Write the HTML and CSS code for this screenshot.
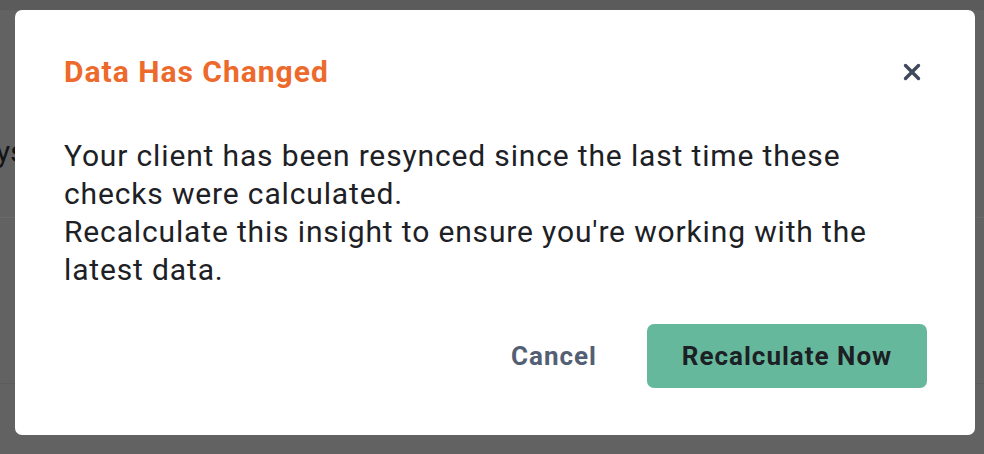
FILE: index.html
```html
<!DOCTYPE html>
<html lang="en">
<head>
<meta charset="utf-8">
<title>Data Has Changed</title>
<link rel="stylesheet" href="styles.css">
</head>
<body>
<div class="page">
  <div class="page-header"></div>
  <div class="page-row page-row-first"><span class="page-text">ys</span></div>
  <div class="page-row page-row-second"></div>
</div>

<div class="overlay">
  <div class="modal" role="dialog" aria-labelledby="modal-title">
    <div class="modal-head">
      <h2 class="modal-title" id="modal-title">Data Has Changed</h2>
      <button class="modal-close" aria-label="Close">
        <svg width="18" height="18" viewBox="0 0 18 18" aria-hidden="true">
          <path d="M2.5 2.5 L15.5 15.5 M15.5 2.5 L2.5 15.5" stroke="#3f4a5b" stroke-width="3.4" stroke-linecap="round" fill="none"/>
        </svg>
      </button>
    </div>
    <div class="modal-body">
      <p>Your client has been resynced since the last time these checks were calculated.</p>
      <p>Recalculate this insight to ensure you're working with the latest data.</p>
    </div>
    <div class="modal-actions">
      <button class="btn btn-cancel">Cancel</button>
      <button class="btn btn-primary">Recalculate Now</button>
    </div>
  </div>
</div>
</body>
</html>
```

FILE: styles.css
```css
* {
  box-sizing: border-box;
}

html, body {
  margin: 0;
  padding: 0;
  height: 100%;
}

body {
  background: #626262;
  font-family: Roboto, "Noto Sans", Arial, sans-serif;
  overflow: hidden;
}

.page {
  display: flex;
  flex-direction: column;
}

.page-header {
  height: 10px;
  background: #5b5b5b;
}

.page-row {
  display: flex;
}

.page-row-first {
  height: 208px;
  align-items: flex-end;
  border-bottom: 1px solid #6a6a6a;
  padding-bottom: 45px;
}

.page-text {
  font-size: 30px;
  line-height: 40px;
  color: #141414;
  margin-left: -4px;
}

.page-row-second {
  height: 166px;
  border-bottom: 1px solid #5c5c5c;
}

.overlay {
  position: fixed;
  inset: 0;
  display: flex;
  align-items: flex-start;
  justify-content: flex-start;
  padding: 10px 0 0 15px;
}

.modal {
  width: 960px;
  background: #ffffff;
  border-radius: 7px;
  padding: 44px 48px 47px 49px;
  display: flex;
  flex-direction: column;
}

.modal-head {
  display: flex;
  align-items: center;
  justify-content: space-between;
  height: 36px;
}

.modal-title {
  margin: 0;
  font-size: 30px;
  line-height: 36px;
  font-weight: 700;
  letter-spacing: 1px;
  color: #ec6a2c;
}

.modal-close {
  width: 30px;
  height: 30px;
  padding: 0;
  border: 0;
  background: transparent;
  display: flex;
  align-items: center;
  justify-content: center;
  cursor: pointer;
}

.modal-body {
  margin-top: 47px;
  font-size: 30px;
  line-height: 38px;
  letter-spacing: 0.85px;
  color: #1d2125;
}

.modal-body p {
  margin: 0;
}

.modal-actions {
  margin-top: 35px;
  display: flex;
  justify-content: flex-end;
  align-items: center;
  gap: 18px;
}

.btn {
  font-family: Roboto, "Noto Sans", Arial, sans-serif;
  font-size: 26px;
  font-weight: 700;
  letter-spacing: 1px;
  height: 64px;
  border: 0;
  border-radius: 7px;
  padding: 0 32px;
  cursor: pointer;
}

.btn-cancel {
  background: transparent;
  color: #536074;
}

.btn-primary {
  width: 280px;
  background: #66b89c;
  color: #1c2024;
}
```
